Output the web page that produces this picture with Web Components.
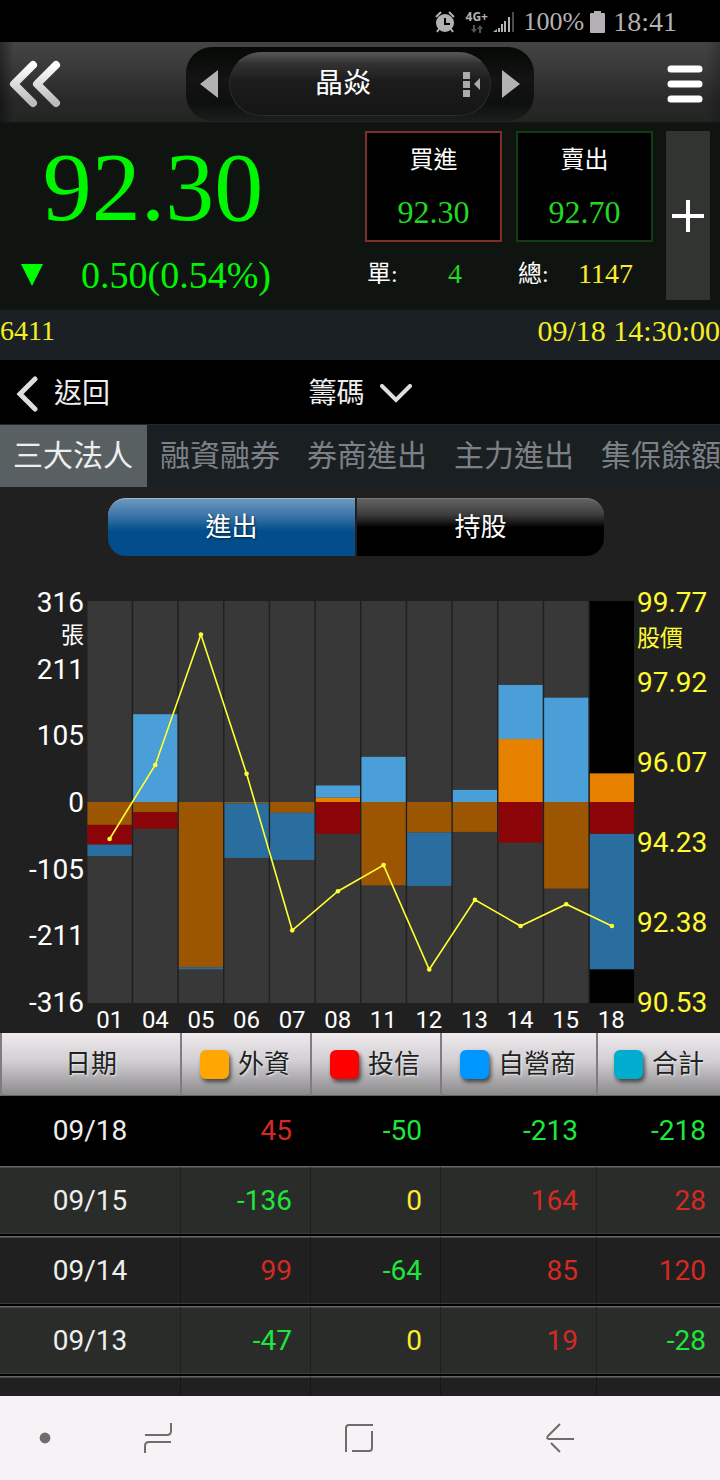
<!DOCTYPE html>
<html lang="zh-Hant">
<head>
<meta charset="utf-8">
<meta name="viewport" content="width=device-width, initial-scale=1">
<title>晶焱 6411</title>
<style>
    body {
        margin: 0;
        background: #202020;
        --serif: "Liberation Serif", "Noto Sans CJK TC", serif;
        --sans: Roboto, "Noto Sans CJK TC", sans-serif;
        --up: #d42a24;
        --down: #1ee63c;
        --flat: #ffea2e;
        font-family: var(--serif);
        color: #fff;
    }
</style>
</head>
<body>
<stock-app>
    <status-bar battery="100%" time="18:41"></status-bar>
    <app-header>晶焱</app-header>
    <quote-board></quote-board>
    <section-nav></section-nav>
    <tab-strip tabs="三大法人,融資融券,券商進出,主力進出,集保餘額"></tab-strip>
    <segment-toggle first="進出" second="持股"></segment-toggle>
    <chip-chart></chip-chart>
    <trade-table></trade-table>
    <system-bar></system-bar>
</stock-app>

<script>
    const RESET = `
        :host, *{box-sizing:border-box}
        button{margin:0; padding:0; border:0; background:none; color:inherit; font:inherit; cursor:pointer}
        svg{display:block}
    `;

    const DAYS = [
        {day: '01', foreign: -36, trust: -31, dealer: -18, price: 94.3},
        {day: '04', foreign: -16, trust: -26, dealer: 138, price: 96},
        {day: '05', foreign: -260, trust: 0, dealer: -3, price: 99},
        {day: '06', foreign: -2, trust: 0, dealer: -86, price: 95.8},
        {day: '07', foreign: -17, trust: 0, dealer: -74, price: 92.2},
        {day: '08', foreign: 7, trust: -50, dealer: 19, price: 93.1},
        {day: '11', foreign: -131, trust: 0, dealer: 71, price: 93.7},
        {day: '12', foreign: -48, trust: 0, dealer: -84, price: 91.3},
        {day: '13', foreign: -47, trust: 0, dealer: 19, price: 92.9},
        {day: '14', foreign: 99, trust: -64, dealer: 85, price: 92.3},
        {day: '15', foreign: -136, trust: 0, dealer: 164, price: 92.8},
        {day: '18', foreign: 45, trust: -50, dealer: -213, price: 92.3}
    ];

    class StockApp extends HTMLElement {
        connectedCallback() {
            this.attachShadow({mode: 'open'});
            this.shadowRoot.innerHTML =
                `<style>
                    :host{display:flex; flex-direction:column; min-height:100vh; overflow:hidden}
                    ::slotted(system-bar){margin-top:auto}
                </style>
                <slot></slot>`;
        }
    }

    class StatusBar extends HTMLElement {
        connectedCallback() {
            this.attachShadow({mode: 'open'});
            this.shadowRoot.innerHTML =
                `<style>${RESET}
                    :host{display:flex; align-items:center; justify-content:flex-end; height:42px;
                          padding:2px 43px 0 0; background:#000; color:#b4b1b4; font-size:28px; line-height:40px}
                    .net{display:grid; justify-items:center; gap:2px; width:22px; margin:0 5px 0 11px;
                         font:bold 12px/12px "Open Sans", sans-serif}
                    .battery{margin-left:10px; font-size:26px}
                    .cell{margin:0 8px 0 6px}
                </style>
                <svg width="20" height="22" viewBox="0 0 20 22" fill="#b4b1b4">
                    <circle cx="10" cy="12" r="9"/>
                    <path d="M1 6L6 1M19 6L14 1M4 18L2 21M16 18L18 21" stroke="#b4b1b4" stroke-width="2" fill="none"/>
                    <path d="M10 7V13H15" stroke="#000" stroke-width="2" fill="none"/>
                </svg>
                <div class="net">
                    <span>4G+</span>
                    <svg width="12" height="8" viewBox="0 0 12 8" fill="#555"><path d="M2 0h2v4h2L3 8 0 4h2zM8 8h2V4h2L9 0 6 4h2z"/></svg>
                </div>
                <svg width="21" height="22" viewBox="0 0 21 22" fill="#b4b1b4">
                    <path d="M0 21L4 18V21zM5 17h2v4H5zM8 13h2v8H8zM11 10h2v11h-2zM15 6h2v15h-2z"/>
                    <path d="M19 1h2v20h-2z" fill="#4a4a4a"/>
                </svg>
                <span class="battery">${this.getAttribute('battery')}</span>
                <svg class="cell" width="15" height="22" viewBox="0 0 15 22" fill="#b4b1b4"><path d="M4 0h7v2h3q1 0 1 1v18q0 1-1 1H1q-1 0-1-1V3q0-1 1-1h3z"/></svg>
                <span>${this.getAttribute('time')}</span>`;
        }
    }

    class AppHeader extends HTMLElement {
        connectedCallback() {
            this.attachShadow({mode: 'open'});
            this.shadowRoot.innerHTML =
                `<style>${RESET}
                    :host{display:grid; grid-template-columns:1fr auto 1fr; align-items:center; height:82px;
                          padding:2px 16px 0 8px; box-shadow:inset 0 -2px #121512;
                          background:linear-gradient(90deg, #0006, #0000 14px, #0000 98%, #0003), linear-gradient(#444, #3a3a3a 30%, #282928 70%, #222422)}
                    .menu{justify-self:end}
                    .switcher{display:flex; align-items:center; justify-content:space-between; width:348px; height:74px;
                              margin-left:-8px; margin-right:-16px; padding:0 14px;
                              border-radius:26px; background:linear-gradient(#050805, #131413 45%, #0c100d 75%, #1c1d1c)}
                    .name{display:grid; grid-template-columns:1fr auto; align-items:center; width:262px; height:64px;
                          padding:0 9px 0 0; border-radius:32px; border:1px solid #2c2c2c; border-top-color:#555;
                          background:linear-gradient(#565656, #333 16%, #1c1c1c 45%, #151515)}
                    .name span{padding-right:7px; font-size:28px; line-height:40px}
                </style>
                <button aria-label="返回上頁">
                    <svg width="54" height="50" viewBox="0 0 54 50" fill="none" stroke-width="8" stroke-linecap="round" stroke-linejoin="round">
                        <defs><linearGradient id="silver" x2="0" y2="1"><stop stop-color="#fff"/><stop offset="1" stop-color="#bbb"/></linearGradient></defs>
                        <path d="M25 6L6 25L25 44M48 6L29 25L48 44" stroke="url(#silver)"/>
                    </svg>
                </button>
                <div class="switcher">
                    <button aria-label="上一檔"><svg width="18" height="28" viewBox="0 0 18 28"><path d="M0 14L18 0V28z" fill="#b2b2b2"/></svg></button>
                    <button class="name">
                        <span><slot></slot></span>
                        <svg width="18" height="26" viewBox="0 0 18 26" fill="#aaa"><path d="M0 1h7v7H0zM0 10h7v7H0zM0 19h7v7H0zM11 13L17 7V19z"/></svg>
                    </button>
                    <button aria-label="下一檔"><svg width="18" height="28" viewBox="0 0 18 28"><path d="M18 14L0 0V28z" fill="#b2b2b2"/></svg></button>
                </div>
                <button class="menu" aria-label="選單">
                    <svg width="38" height="38" viewBox="0 0 38 38"><path d="M5 4H33M5 19H33M5 34H33" stroke="#fff" stroke-width="7" stroke-linecap="round"/></svg>
                </button>`;
        }
    }

    class QuoteBoard extends HTMLElement {
        connectedCallback() {
            this.attachShadow({mode: 'open'});
            this.shadowRoot.innerHTML =
                `<style>${RESET}
                    :host{display:block; background:#101410; border-bottom:1px solid #000}
                    .board{display:grid; grid-template-columns:1fr 288px 44px; gap:13px; padding:7px 10px 3px 0}
                    .last{color:#00f600}
                    .price{padding-right:46px; text-align:center; font-size:98px; line-height:112px}
                    .change{display:flex; align-items:center; gap:38px; padding-left:21px; font-size:38px; line-height:64px}
                    .orders{display:grid; grid-template-columns:1fr 1fr; column-gap:14px; align-content:start}
                    .box{display:grid; justify-items:center; height:111px; padding-top:3px; border:2px solid #7f2e2a; background:#000}
                    .box.sell{border-color:#113d10}
                    .box span{font-size:24px; line-height:48px}
                    .box b{font-size:32px; line-height:56px; font-weight:400; color:#23d723}
                    .count{display:flex; line-height:64px; font-size:24px; padding-left:2px}
                    .count b{flex:1; padding-right:20px; text-align:right; font-size:28px; font-weight:400; color:var(--flat)}
                    .count .single{padding-right:40px; color:#23d723}
                    .add{display:grid; place-items:center; margin-bottom:7px; background:#323432}
                    .strip{display:flex; justify-content:space-between; height:50px; background:#1a2023;
                           color:#f5ee26; font-size:28px; line-height:42px}
                    .strip time{font-size:30px}
                </style>
                <div class="board">
                    <div class="last">
                        <div class="price">92.30</div>
                        <div class="change">
                            <svg width="22" height="22" viewBox="0 0 22 22"><path d="M0 0H22L11 22z" fill="#00ff00"/></svg>
                            <span>0.50(0.54%)</span>
                        </div>
                    </div>
                    <div class="orders">
                        <button class="box"><span>買進</span><b>92.30</b></button>
                        <button class="box sell"><span>賣出</span><b>92.70</b></button>
                        <div class="count"><span>單:</span><b class="single">4</b></div>
                        <div class="count"><span>總:</span><b>1147</b></div>
                    </div>
                    <button class="add" aria-label="加入自選">
                        <svg width="32" height="32" viewBox="0 0 32 32"><path d="M0 16H32M16 0V32" stroke="#fff" stroke-width="4"/></svg>
                    </button>
                </div>
                <div class="strip"><span>6411</span><time>09/18 14:30:00</time></div>`;
        }
    }

    class SectionNav extends HTMLElement {
        connectedCallback() {
            this.attachShadow({mode: 'open'});
            this.shadowRoot.innerHTML =
                `<style>${RESET}
                    :host{display:grid; grid-template-columns:1fr auto 1fr; align-items:center; height:63px; padding-top:2px;
                          background:#000; color:#eee; font-size:28px; line-height:40px}
                    .back{display:flex; align-items:center; gap:16px; justify-self:start; padding-left:16px}
                    .pick{position:relative; display:flex; align-items:center}
                    select{appearance:none; margin:0; border:0; padding:0 46px 0 0; background:none; color:inherit; font:inherit; line-height:40px}
                    .pick svg{position:absolute; right:0; pointer-events:none}
                </style>
                <button class="back">
                    <svg width="22" height="36" viewBox="0 0 22 36"><path d="M19 3L4 18L19 33" fill="none" stroke="#ddd" stroke-width="5" stroke-linecap="round"/></svg>
                    <span>返回</span>
                </button>
                <div class="pick">
                    <select aria-label="分析項目"><option>籌碼</option></select>
                    <svg width="32" height="20" viewBox="0 0 32 20"><path d="M2 2L16 16L30 2" fill="none" stroke="#ddd" stroke-width="4" stroke-linecap="round"/></svg>
                </div>`;
        }
    }

    class TabStrip extends HTMLElement {
        connectedCallback() {
            let tabs = this.getAttribute('tabs').split(',');
            this.attachShadow({mode: 'open'});
            this.shadowRoot.innerHTML =
                `<style>${RESET}
                    :host{display:flex; overflow:hidden; background:#1a2022; border-top:1px solid #22282a; color:#7d8187; font-size:30px; line-height:62px}
                    button{flex:none; padding:0 14px 0 13px}
                    button[aria-selected=true]{background:#596062; color:#eee}
                </style>` +
                tabs.map((tab, i) => `<button role="tab" aria-selected="${i === 0}">${tab}</button>`).join('');
            this.setAttribute('role', 'tablist');
        }
    }

    class SegmentToggle extends HTMLElement {
        connectedCallback() {
            this.attachShadow({mode: 'open'});
            this.shadowRoot.innerHTML =
                `<style>${RESET}
                    :host{display:grid; grid-template-columns:1fr 1fr; gap:2px; padding:11px 116px 0 108px;
                          font-family:var(--sans); font-size:26px; line-height:57px}
                    button{height:58px; border-top:1px solid #777; border-radius:0 18px 18px 0; text-shadow:1px 1px 2px #0008;
                           background:linear-gradient(#626262, #3c3c3c 28%, #000 50%)}
                    button[aria-pressed=true]{border-top-color:#9db8cc; border-radius:18px 0 0 18px;
                           background:linear-gradient(#6a99be, #3a74a7 30%, #024d8b 56%)}
                </style>
                <button aria-pressed="true">${this.getAttribute('first')}</button>
                <button aria-pressed="false">${this.getAttribute('second')}</button>`;
        }
    }

    class ChipChart extends HTMLElement {
        connectedCallback() {
            this.attachShadow({mode: 'open'});
            this.shadowRoot.innerHTML =
                `<style>${RESET}
                    :host{display:grid; grid-template-columns:87px 1fr 86px; margin-top:31px; font-family:var(--sans); font-size:28px; line-height:32px}
                    .axis{display:grid; height:432px}
                    .volume{grid-template-rows:repeat(6, 1fr) 32px; padding-right:3px; text-align:right}
                    .price{grid-template-rows:repeat(5, 1fr) 32px; padding-left:3px; color:#fffa32}
                    small{display:block; font-size:23px}
                    .volume small{line-height:34px}
                    .price small{line-height:40px}
                    .plot{padding-top:14px}
                    .plot svg{width:100%; height:402px}
                    .days{display:grid; grid-template-columns:repeat(12, 1fr); height:30px; padding-top:2px; text-align:center; font-size:24px; line-height:30px}
                </style>
                <div class="axis volume">${this.labels(['316', '211', '105', '0', '-105', '-211', '-316'], '張')}</div>
                <div class="plot">
                    ${this.drawPlot()}
                    <div class="days">${DAYS.map(d => `<span>${d.day}</span>`).join('')}</div>
                </div>
                <div class="axis price">${this.labels(['99.77', '97.92', '96.07', '94.23', '92.38', '90.53'], '股價')}</div>`;
        }

        labels(values, unit) {
            return values.map((v, i) => `<div>${v}${i === 0 ? `<small>${unit}</small>` : ''}</div>`).join('');
        }

        drawPlot() {
            const width = 548, height = 402, max = 316, high = 99.77, low = 90.53;
            const step = width / DAYS.length;
            const bar = step - 1.5;
            const colors = {foreign: ['#e68200', '#9c5500'], trust: ['#ff0000', '#8b0508'], dealer: ['#4a9fd8', '#296e9e']};
            let shapes = '';
            let dots = '';
            let points = [];
            DAYS.forEach((d, i) => {
                let x = i * step + 0.5;
                let up = height / 2;
                let down = height / 2;
                let back = i === DAYS.length - 1 ? '#000' : '#383838';
                shapes += `<rect x="${x}" y="0" width="${bar}" height="${height}" fill="${back}"/>`;
                // stacked away from the zero line in both directions
                for (let key in colors) {
                    let size = Math.abs(d[key]) / max * height / 2;
                    if (d[key] > 0) {
                        up -= size;
                        shapes += `<rect x="${x}" y="${up}" width="${bar}" height="${size}" fill="${colors[key][0]}"/>`;
                    } else if (d[key] < 0) {
                        shapes += `<rect x="${x}" y="${down}" width="${bar}" height="${size}" fill="${colors[key][1]}"/>`;
                        down += size;
                    }
                }
                let cx = x + bar / 2;
                let cy = (high - d.price) / (high - low) * height;
                points.push(cx + ',' + cy);
                dots += `<circle cx="${cx}" cy="${cy}" r="2.3" fill="#ffff32"/>`;
            });
            return `<svg viewBox="0 0 ${width - 1} ${height}" preserveAspectRatio="none" role="img" aria-label="三大法人進出與股價">
                ${shapes}<polyline points="${points.join(' ')}" fill="none" stroke="#ffff32" stroke-width="1.6"/>${dots}</svg>`;
        }
    }

    class TradeTable extends HTMLElement {
        connectedCallback() {
            let rows = DAYS.slice(-4).reverse();
            this.attachShadow({mode: 'open'});
            this.shadowRoot.innerHTML =
                `<style>${RESET}
                    :host{display:block; font-family:var(--sans); font-size:28px; line-height:32px}
                    table{width:100%; table-layout:fixed; border-spacing:0; border-collapse:separate}
                    .date{width:180px}
                    .col{width:130px}
                    .wide{width:156px}
                    th{height:63px; padding:0 20px 0 0; border-left:2px solid #7e7c7e; border-bottom:1px solid #666; text-align:right; font-size:26px; font-weight:400;
                       color:#222; text-shadow:1px 1px 2px #eee; background:linear-gradient(#eeeaee, #d2cfd2 45%, #8b8a8b)}
                    th:first-child, td:first-child{padding:0; text-align:center}
                    th:last-child{padding-right:16px}
                    th span{display:flex; align-items:center; justify-content:flex-end; gap:9px; white-space:nowrap}
                    i{width:29px; height:29px; border-radius:6px; box-shadow:2px 3px 4px #0009}
                    td{height:70px; padding:0 18px 0 0; border-left:1px solid #0004; text-align:right}
                    td:first-child{border-left:0; color:#eee}
                    td:last-child{padding-right:14px}
                    tr{--back:#202020}
                    tr:nth-child(even){--back:#2a2c2a}
                    tbody tr{background:linear-gradient(#666 1px, #484848 1px 2px, var(--back) 2px 67px, #3c3c3c 67px 68px, #000 68px)}
                    tbody tr:first-child{background:#000}
                    tbody tr.more td{height:20px}
                    .up{color:var(--up)}
                    .down{color:var(--down)}
                    .flat{color:var(--flat)}
                </style>
                <table>
                    <colgroup><col class="date"><col class="col"><col class="col"><col class="wide"><col></colgroup>
                    <thead><tr>
                        <th>日期</th>
                        <th><span><i style="background:#ffa600"></i>外資</span></th>
                        <th><span><i style="background:#ff0000"></i>投信</span></th>
                        <th><span><i style="background:#0096ff"></i>自營商</span></th>
                        <th><span><i style="background:#00adcf"></i>合計</span></th>
                    </tr></thead>
                    <tbody>
                        ${rows.map(r => this.row(r)).join('')}
                        <tr class="more"><td></td><td></td><td></td><td></td><td></td></tr>
                    </tbody>
                </table>`;
        }

        row(r) {
            let values = [r.foreign, r.trust, r.dealer, r.foreign + r.trust + r.dealer];
            let cells = values.map(v => `<td class="${v > 0 ? 'up' : v < 0 ? 'down' : 'flat'}">${v}</td>`);
            return `<tr><td>09/${r.day}</td>${cells.join('')}</tr>`;
        }
    }

    class SystemBar extends HTMLElement {
        connectedCallback() {
            this.attachShadow({mode: 'open'});
            this.shadowRoot.innerHTML =
                `<style>${RESET}
                    :host{display:grid; grid-template-columns:57px 1fr 1fr 1fr; align-items:center; height:84px; padding-right:60px; background:#f6f3f6}
                    button{justify-self:center}
                    .dot{justify-self:end; padding-right:6px}
                    svg{fill:none; stroke:#6f6d6c; stroke-width:2}
                </style>
                <button class="dot" aria-label="隱藏導覽列"><svg width="12" height="12" viewBox="0 0 12 12"><circle cx="6" cy="6" r="5.4" style="fill:#6f6d6c; stroke:none"/></svg></button>
                <button aria-label="最近使用"><svg width="28" height="32" viewBox="0 0 28 32"><path d="M27 1V9Q27 13 23 13H1M27 20H5Q1 20 1 24V31"/></svg></button>
                <button aria-label="首頁"><svg width="30" height="30" viewBox="0 0 30 30"><path d="M29 2H5Q2 2 2 5V29M28 8V25Q28 28 25 28H8"/></svg></button>
                <button aria-label="返回"><svg width="28" height="30" viewBox="0 0 28 30"><path d="M14 1L2 13Q0 16 3 16H28M5 20L14 29"/></svg></button>`;
        }
    }

    customElements.define('stock-app', StockApp);
    customElements.define('status-bar', StatusBar);
    customElements.define('app-header', AppHeader);
    customElements.define('quote-board', QuoteBoard);
    customElements.define('section-nav', SectionNav);
    customElements.define('tab-strip', TabStrip);
    customElements.define('segment-toggle', SegmentToggle);
    customElements.define('chip-chart', ChipChart);
    customElements.define('trade-table', TradeTable);
    customElements.define('system-bar', SystemBar);
</script>
</body>
</html>
